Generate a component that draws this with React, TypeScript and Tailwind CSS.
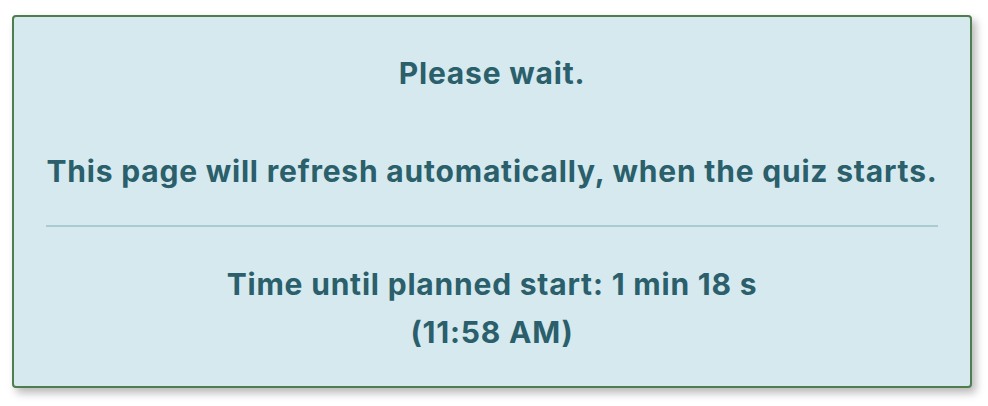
export default function App() {
  return (
    <div className="w-[988px] h-[406px] bg-white pl-[12px] pt-[15px]" style={{ fontFamily: "Inter, 'Noto Sans', sans-serif" }}>
      <div className="w-[960px] h-[373px] rounded-[4px] border-2 border-[#4e7d4e] bg-[#d5e9ee] shadow-[4px_5px_8px_rgba(0,0,0,0.28)] px-[32px] pt-[33px] text-center text-[#2a5f6b] font-bold text-[30px] leading-[47px] tracking-[0.8px]">
        <div>Please wait.</div>
        <div className="mt-[51px]">This page will refresh automatically, when the quiz starts.</div>
        <div className="mt-[30px] h-[2px] bg-[#a9cbd1]" />
        <div className="mt-[34px]">Time until planned start: 1 min 18 s</div>
        <div className="mt-[1px]">(11:58 AM)</div>
      </div>
    </div>
  );
}
